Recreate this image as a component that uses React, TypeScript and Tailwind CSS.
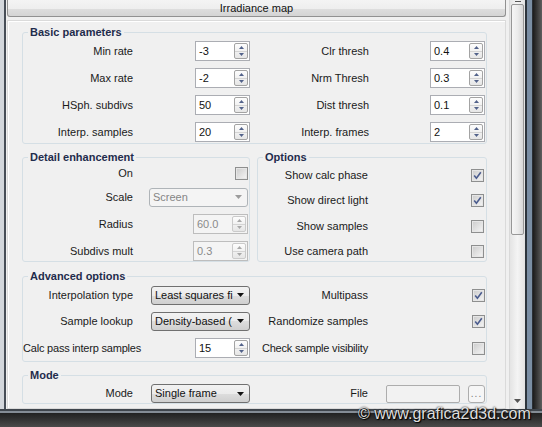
import React from 'react';

// small triangle used by spinners / dropdowns
const Tri = ({ dir, color, w = 5, h = 3 }: { dir: 'up' | 'down'; color: string; w?: number; h?: number }) => (
  <svg width={w} height={h} viewBox={`0 0 ${w} ${h}`}>
    {dir === 'up' ? (
      <path d={`M${w / 2} 0 L${w} ${h} L0 ${h} Z`} fill={color} />
    ) : (
      <path d={`M0 0 L${w} 0 L${w / 2} ${h} Z`} fill={color} />
    )}
  </svg>
);

function Spinner({ value, disabled = false }: { value: string; disabled?: boolean }) {
  const arrow = disabled ? '#a8a8a8' : '#52628a';
  return (
    <div
      className={`flex h-[20px] w-[55px] shrink-0 items-center border ${
        disabled ? 'border-[#bdbdbd] bg-[#f4f4f4] text-[#8a8a8a]' : 'border-[#abadb3] bg-white text-[#111]'
      }`}
    >
      <span className="flex-1 pl-[3px] leading-none">{value}</span>
      <div
        className={`mr-[1px] flex h-[16px] w-[14px] flex-col rounded-[2px] border bg-linear-to-b from-[#fdfdfd] to-[#e6e6e6] ${
          disabled ? 'border-[#cacaca]' : 'border-[#a3a3a3]'
        }`}
      >
        <div className="flex flex-1 items-center justify-center border-b border-[#d4d4d4]">
          <Tri dir="up" color={arrow} />
        </div>
        <div className="flex flex-1 items-center justify-center">
          <Tri dir="down" color={arrow} />
        </div>
      </div>
    </div>
  );
}

function Dropdown({ value, disabled = false }: { value: string; disabled?: boolean }) {
  return (
    <div
      className={`flex h-[19px] w-[99px] shrink-0 items-center rounded-[3px] border ${
        disabled
          ? 'border-[#afb4b8] bg-[#f4f4f4] text-[#858585]'
          : 'border-[#707070] bg-[linear-gradient(#f2f2f2,#ebebeb_50%,#dddddd_50%,#cfcfcf)] text-[#111]'
      }`}
    >
      <span className="w-[80px] whitespace-nowrap pl-[3px] leading-none">{value}</span>
      <div className="flex flex-1 justify-center">
        <Tri dir="down" color={disabled ? '#9c9c9c' : '#111'} w={7} h={4} />
      </div>
    </div>
  );
}

function Check({ checked = false }: { checked?: boolean }) {
  return (
    <div className="flex h-[13px] w-[13px] shrink-0 items-center justify-center border border-[#8e8f8f] bg-[#f4f4f4]">
      <div className="flex h-[11px] w-[11px] items-center justify-center border border-[#e6e6e6] bg-linear-to-br from-[#cfcfcf] to-[#f2f2f2]">
        {checked && (
          <svg width="9" height="9" viewBox="0 0 9 9">
            <path d="M1.2 4.6 L3.4 7.2 L7.8 1.2" stroke="#4b5c8e" strokeWidth="1.6" fill="none" />
          </svg>
        )}
      </div>
    </div>
  );
}

function Group({ title, className, children }: { title: string; className?: string; children: React.ReactNode }) {
  return (
    <fieldset className={`rounded-[3px] border border-[#d5dfe5] px-0 ${className ?? ''}`}>
      <legend className="ml-[5px] px-[2px] text-[11px] font-bold leading-[12px] text-[#1f2c4c]">{title}</legend>
      {children}
    </fieldset>
  );
}

const Label = ({ w, children }: { w: string; children: React.ReactNode }) => (
  <span className={`${w} shrink-0 whitespace-nowrap text-right`}>{children}</span>
);

export default function App() {
  return (
    <div className="relative flex h-[427px] w-[542px] flex-col overflow-hidden bg-[#2a2a2a] font-['Liberation_Sans',Arial,sans-serif] text-[11px] text-[#1a1a1a]">
      <div className="flex h-[409px]">
        <div className="w-[4px] bg-[#d3d7dc]" />
        <div className="w-[2px] bg-[#474e57]" />

        <main className="flex w-[503px] flex-col bg-[#f0f0f0] pl-[1px] pr-[3px]">
          {/* rollout header */}
          <div className="flex h-[17px] w-[499px] items-center justify-center rounded-b-[3px] border-x border-b border-[#919191] bg-[linear-gradient(#f4f4f4,#eeeeee_55%,#dedede_55%,#d4d4d4)] leading-none text-[#111]">
            Irradiance map
          </div>

          {/* rollout body */}
          <div className="mt-[3px] flex flex-1 flex-col border border-[#dadada] pl-[14px] pr-[18px] pt-[5px] shadow-[inset_1px_1px_0_#ffffff]">
            <Group title="Basic parameters" className="pb-[1px]">
              <div className="flex flex-col gap-[7px] pt-[3px]">
                {[
                  ['Min rate', '-3', 'Clr thresh', '0.4'],
                  ['Max rate', '-2', 'Nrm Thresh', '0.3'],
                  ['HSph. subdivs', '50', 'Dist thresh', '0.1'],
                  ['Interp. samples', '20', 'Interp. frames', '2'],
                ].map(([l1, v1, l2, v2]) => (
                  <div key={l1} className="flex h-[20px] items-center">
                    <Label w="w-[110px]">{l1}</Label>
                    <div className="ml-[62px]">
                      <Spinner value={v1} />
                    </div>
                    <div className="ml-[1px]">
                      <Label w="w-[118px] block">{l2}</Label>
                    </div>
                    <div className="ml-[61px]">
                      <Spinner value={v2} />
                    </div>
                  </div>
                ))}
              </div>
            </Group>

            <div className="mt-[7px] flex gap-[7px]">
              <Group title="Detail enhancement" className="w-[228px]">
                <div className="flex h-[20px] items-center">
                  <Label w="w-[110px]">On</Label>
                  <div className="ml-[102px]">
                    <Check />
                  </div>
                </div>
                <div className="mt-[4px] flex h-[20px] items-center">
                  <Label w="w-[110px]">Scale</Label>
                  <div className="ml-[16px]">
                    <Dropdown value="Screen" disabled />
                  </div>
                </div>
                <div className="mt-[7px] flex h-[20px] items-center">
                  <Label w="w-[110px]">Radius</Label>
                  <div className="ml-[60px]">
                    <Spinner value="60.0" disabled />
                  </div>
                </div>
                <div className="mt-[7px] flex h-[20px] items-center">
                  <Label w="w-[110px]">Subdivs mult</Label>
                  <div className="ml-[60px]">
                    <Spinner value="0.3" disabled />
                  </div>
                </div>
              </Group>

              <Group title="Options" className="w-[230px]">
                <div className="flex flex-col gap-[7.5px] pt-[3px]">
                  {[
                    ['Show calc phase', true],
                    ['Show direct light', true],
                    ['Show samples', false],
                    ['Use camera path', false],
                  ].map(([l, c]) => (
                    <div key={l as string} className="flex h-[18px] items-center">
                      <Label w="w-[110px]">{l as string}</Label>
                      <div className="ml-[103px]">
                        <Check checked={c as boolean} />
                      </div>
                    </div>
                  ))}
                </div>
              </Group>
            </div>

            <Group title="Advanced options" className="mt-[8px] pb-[3px]">
              <div className="mt-[3px] flex h-[20px] items-center">
                <Label w="w-[110px]">Interpolation type</Label>
                <div className="ml-[18px]">
                  <Dropdown value="Least squares fi" />
                </div>
                <Label w="w-[117px] ml-[1px]">Multipass</Label>
                <div className="ml-[104px]">
                  <Check checked />
                </div>
              </div>
              <div className="mt-[6px] flex h-[20px] items-center">
                <Label w="w-[110px]">Sample lookup</Label>
                <div className="ml-[18px]">
                  <Dropdown value="Density-based (" />
                </div>
                <Label w="w-[117px] ml-[1px]">Randomize samples</Label>
                <div className="ml-[104px]">
                  <Check checked />
                </div>
              </div>
              <div className="mt-[7px] flex h-[20px] items-center">
                <span className="w-[110px] shrink-0 whitespace-nowrap tracking-[-0.2px]">Calc pass interp samples</span>
                <div className="ml-[62px]">
                  <Spinner value="15" />
                </div>
                <Label w="w-[118px] tracking-[-0.2px]">Check sample visibility</Label>
                <div className="ml-[104px]">
                  <Check />
                </div>
              </div>
            </Group>

            <Group title="Mode" className="mt-[7px]">
              <div className="mt-[3px] flex h-[19px] items-center">
                <Label w="w-[110px]">Mode</Label>
                <div className="ml-[18px]">
                  <Dropdown value="Single frame" />
                </div>
                <Label w="w-[117px] ml-[1px]">File</Label>
                <div className="ml-[18px] h-[18px] w-[74px] rounded-[2px] border border-[#adadad] bg-[#f2f2f2]" />
                <div className="ml-[8px] flex h-[18px] w-[17px] items-end justify-center rounded-[3px] border border-[#adadad] bg-[#f6f6f6] pb-[3px] text-[10px] leading-none tracking-[1px] text-[#7a7a7a]">
                  ...
                </div>
              </div>
            </Group>
          </div>
        </main>

        {/* scrollbar */}
        <div className="flex w-[16px] flex-col border-l border-[#d9d9d9] bg-linear-to-r from-[#e4e4e4] via-[#f4f4f4] to-[#e2e2e2]">
          <div className="flex h-[4px] items-start justify-center pt-[1px]">
            <div className="h-[1px] w-[6px] bg-[#555]" />
          </div>
          <div className="mx-[1px] h-[231px] rounded-[2px] border border-[#979797] bg-linear-to-r from-[#f6f6f6] via-[#ececec] to-[#d7d7d7]" />
          <div className="flex-1" />
          <div className="flex h-[16px] items-center justify-center">
            <Tri dir="down" color="#555" w={7} h={4} />
          </div>
        </div>

        {/* window frame, right */}
        <div className="w-[2px] bg-[#2c343c]" />
        <div className="w-[5px] bg-[#7a8ea4]" />
        <div className="w-[1px] bg-[#2a2f35]" />
        <div className="w-[9px] bg-linear-to-r from-[#1c1c1c] to-[#5e5e5e]" />
      </div>

      {/* window frame, bottom */}
      <div className="h-[2px] bg-[#3f454c]" />
      <div className="h-[2px] bg-[#858d96]" />
      <div className="flex-1 bg-linear-to-b from-[#222] to-[#4a4a4a]" />

      {/* watermark */}
      <div className="absolute left-[358px] top-[405px] whitespace-nowrap font-['Liberation_Sans',Arial,sans-serif] text-[16px] leading-[18px] text-[#dedede] [text-shadow:0_0_2px_#000,1px_1px_1px_#000]">
        © www.grafica2d3d.com
      </div>
    </div>
  );
}
